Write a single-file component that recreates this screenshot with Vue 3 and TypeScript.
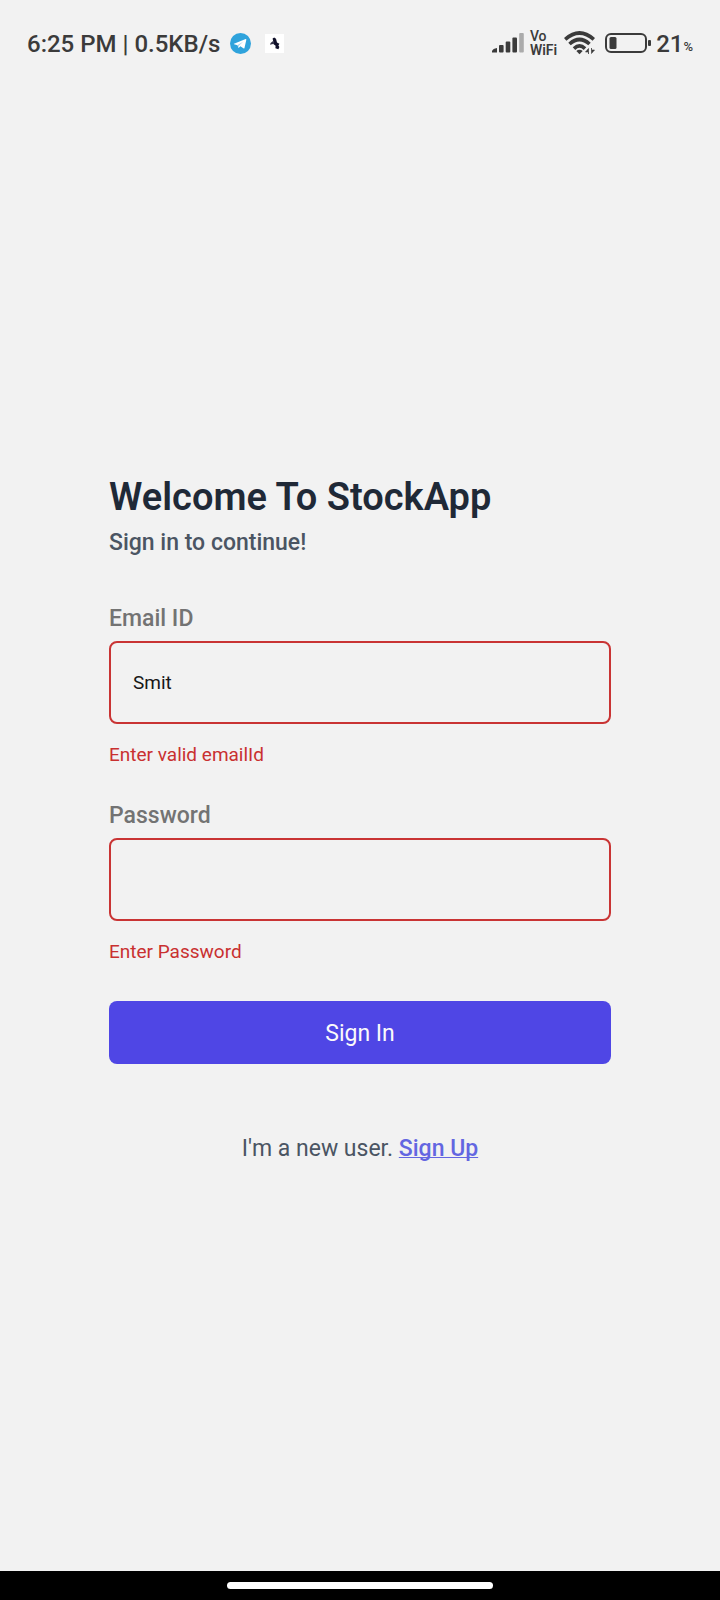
<script setup lang="ts">
import { reactive } from 'vue'

interface Field {
  id: string
  label: string
  type: string
  value: string
  error: string
}

const fields = reactive<Field[]>([
  { id: 'email', label: 'Email ID', type: 'text', value: 'Smit', error: 'Enter valid emailId' },
  { id: 'password', label: 'Password', type: 'password', value: '', error: 'Enter Password' },
])
</script>

<template>
  <div class="screen">
    <header class="status">
      <div class="status-left">
        <span class="clock">6:25 PM | 0.5KB/s</span>
        <svg class="telegram" width="21" height="21" viewBox="0 0 20 20" aria-hidden="true">
          <circle cx="10" cy="10" r="10" fill="#2fa3dc" />
          <path d="M3.8 10.2 14.9 5.8Q15.7 5.6 15.5 6.6L13.8 14.2Q13.5 15 12.7 14.6L9.9 12.6 8.4 14Q7.9 14.3 7.8 13.6L7.2 11.6 3.9 10.7Q3.3 10.4 3.8 10.2Z" fill="#fff" />
          <path d="M7.3 11.5 12.8 8 8.7 12 8.2 13.8Z" fill="#a9d5ee" />
        </svg>
        <svg class="app-mark" width="19" height="19" viewBox="0 0 19 19" aria-hidden="true">
          <rect width="19" height="19" fill="#fff" />
          <path d="M7.6 4.6 9.2 3.6 11 4.8 12 8.6 14.4 9.8 13.4 11.4 14.4 13 13.4 15.2 10.4 14.2 10.6 11.8 8.6 10.2 8.2 7.2Z" fill="#11112a" />
          <path d="M8.4 6.8 5.6 9 5 10.8 7 10.2 9.2 9.8Z" fill="#333348" />
        </svg>
      </div>
      <div class="status-right">
        <svg width="32" height="20" viewBox="0 0 32 20" aria-hidden="true">
          <g fill="#3b3b3b">
            <path d="M0 19.5V18Q1 15.5 5 15V19.5Z" />
            <rect x="7" y="12" width="4.600" height="7.500" rx="1" />
            <rect x="13.700" y="8.500" width="4.600" height="11" rx="1" />
            <rect x="20.400" y="4.500" width="4.600" height="15" rx="1" />
          </g>
          <rect x="27.200" y="0" width="4.600" height="19.500" rx="1" fill="#ababab" />
        </svg>
        <span class="vowifi"><span class="vo">Vo</span><span>WiFi</span></span>
        <svg class="wifi" width="31" height="24" viewBox="0 0 31 24" aria-hidden="true">
          <g fill="none" stroke="#3b3b3b" stroke-width="3.600">
            <path d="M1.200 8.400Q15.500-4.400 29.800 8.400" />
            <path d="M5.500 13Q15.500 4 25.500 13" />
            <path d="M10 17.600Q15.500 12.200 21 17.600" />
          </g>
          <path d="M12.300 20Q15.500 17.400 18.700 20L15.500 23.200Z" fill="#3b3b3b" />
          <path d="M24.500 23V17.500L21.500 21H24.500ZM27.500 17V22.500L30.500 19H27.500Z" fill="#3b3b3b" stroke="#3b3b3b" stroke-width="0.600" />
        </svg>
        <svg class="battery" width="46" height="21" viewBox="0 0 46 21" aria-hidden="true">
          <rect x="1" y="1" width="40" height="18" rx="5" fill="none" stroke="#3b3b3b" stroke-width="2" />
          <rect x="4.500" y="4" width="7" height="12" rx="1.500" fill="#3b3b3b" />
          <rect x="43" y="7" width="3" height="6" rx="1" fill="#3b3b3b" />
        </svg>
        <span class="clock">21</span><span class="percent">%</span>
      </div>
    </header>

    <main class="content">
      <form class="form" novalidate @submit.prevent>
        <h1>Welcome To StockApp</h1>
        <p class="subtitle">Sign in to continue!</p>

        <div class="fields">
          <div v-for="field in fields" :key="field.id" class="field">
            <label :for="field.id">{{ field.label }}</label>
            <input
              :id="field.id"
              v-model="field.value"
              :type="field.type"
              :aria-describedby="field.id + '-error'"
              aria-invalid="true"
            />
            <p :id="field.id + '-error'" class="error">{{ field.error }}</p>
          </div>
        </div>

        <button type="submit">Sign In</button>
        <p class="signup">I'm a new user. <a href="#signup">Sign Up</a></p>
      </form>
    </main>

    <footer class="nav-bar"><div class="handle"></div></footer>
  </div>
</template>

<style>
body {
  margin: 0;
}
</style>

<style scoped>
.screen {
  display: flex;
  flex-direction: column;
  min-height: 100vh;
  background: #f2f2f2;
  font-family: Roboto, "Liberation Sans", sans-serif;
}

h1,
p {
  margin: 0;
}

.status {
  display: flex;
  justify-content: space-between;
  align-items: center;
  box-sizing: border-box;
  height: 64px;
  padding: 22px 27px 0;
  color: #3b3b3b;
}

.status-left,
.status-right {
  display: flex;
  align-items: center;
}

.clock {
  padding-top: 2px;
  font-size: 24px;
  font-weight: 500;
  line-height: 40px;
}

.telegram {
  margin-left: 10px;
}

.app-mark {
  margin-left: 14px;
}

.vowifi {
  display: flex;
  flex-direction: column;
  margin-left: 6px;
  font-size: 14px;
  font-weight: 600;
  line-height: 14px;
}

.vo {
  font-weight: 500;
}

.wifi {
  margin-left: 7px;
}

.battery {
  margin: 0 5px 0 10px;
}

.percent {
  margin-top: 7px;
  font-size: 13px;
  font-weight: 500;
}

.content {
  display: flex;
  flex: 1;
  align-items: center;
  padding: 0 109px;
}

.form {
  display: flex;
  flex: 1;
  flex-direction: column;
  min-width: 0;
}

h1 {
  color: #1f2937;
  font-size: 38px;
  font-weight: 600;
  line-height: 48px;
}

.subtitle {
  margin-top: 6px;
  color: #4b5563;
  font-size: 23px;
  font-weight: 500;
  line-height: 32px;
}

.fields {
  display: flex;
  flex-direction: column;
  gap: 35px;
  margin: 46px 0 37px;
}

.field {
  display: flex;
  flex-direction: column;
}

label {
  color: #737373;
  font-size: 23px;
  font-weight: 500;
  line-height: 28px;
}

input {
  box-sizing: border-box;
  width: 100%;
  height: 83px;
  margin: 8px 0 19px;
  padding: 0 22px;
  border: 2px solid #c93434;
  border-radius: 8px;
  outline: none;
  background: transparent;
  color: #171717;
  font-family: inherit;
  font-size: 19px;
}

.error {
  color: #c93030;
  font-size: 19px;
  line-height: 24px;
}

button {
  height: 63px;
  padding: 2px 22px 0;
  border: 0;
  border-radius: 8px;
  background: #4f46e5;
  color: #fafafa;
  font-family: inherit;
  font-size: 23px;
}

.signup {
  margin-top: 71px;
  color: #4b5563;
  font-size: 23px;
  line-height: 28px;
  text-align: center;
}

.signup a {
  color: #6366e1;
  font-weight: 500;
  text-decoration-thickness: 1px;
  text-decoration-skip-ink: none;
}

.nav-bar {
  display: flex;
  align-items: center;
  justify-content: center;
  height: 29px;
  background: #000;
}

.handle {
  width: 37%;
  height: 7px;
  border-radius: 4px;
  background: #fff;
}
</style>
